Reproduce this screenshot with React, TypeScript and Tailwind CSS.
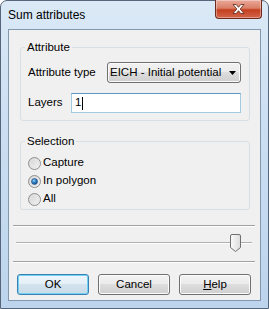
import type { FC, ReactNode } from 'react';

const font = { fontFamily: '"Liberation Sans", Arial, sans-serif' };

const Radio: FC<{ checked?: boolean; label: string }> = ({ checked, label }) => (
  <div className="flex h-[18px] items-center gap-[2px]">
    <svg width="13" height="13" viewBox="0 0 13 13">
      <defs>
        <linearGradient id="rb" x1="0" y1="0" x2="1" y2="1">
          <stop offset="0" stopColor="#cfcfcf" />
          <stop offset="1" stopColor="#f8f8f8" />
        </linearGradient>
        <radialGradient id="dot" cx="0.4" cy="0.35" r="0.7">
          <stop offset="0" stopColor="#9fd7f7" />
          <stop offset="0.5" stopColor="#2b7bc4" />
          <stop offset="1" stopColor="#134f8c" />
        </radialGradient>
      </defs>
      <circle cx="6.5" cy="6.5" r="6" fill="url(#rb)" stroke="#8e8f8f" />
      <circle cx="6.5" cy="6.5" r="4.2" fill="none" stroke="#e6e6e6" />
      {checked && <circle cx="6.5" cy="6.5" r="3" fill="url(#dot)" stroke="#1c4f80" strokeWidth="0.6" />}
    </svg>
    <span>{label}</span>
  </div>
);

const Group: FC<{ title: string; className: string; children: ReactNode }> = ({ title, className, children }) => (
  <fieldset className={`ml-[11px] w-[230px] rounded-[3px] border border-[#d5dfe5] pl-[7px] pr-[8px] ${className}`}>
    <legend className="ml-[-3px] px-[2px] leading-[15px]">{title}</legend>
    {children}
  </fieldset>
);

const Button: FC<{ children: ReactNode; primary?: boolean }> = ({ children, primary }) => (
  <button
    className={
      primary
        ? 'h-[21px] w-[72px] rounded-[3px] border border-[#3c7fb1] bg-[linear-gradient(180deg,#eef6fb_0%,#e3eef6_50%,#d3e3ee_50%,#c9dbe8_100%)] shadow-[inset_0_0_0_1px_#70d3f5] leading-[19px] text-black'
        : 'h-[21px] w-[72px] rounded-[3px] border border-[#707070] bg-[linear-gradient(180deg,#f2f2f2_0%,#ebebeb_50%,#dddddd_50%,#cfcfcf_100%)] shadow-[inset_0_0_0_1px_#fcfcfc] leading-[19px] text-black'
    }
  >
    {children}
  </button>
);

export default function App() {
  return (
    <div
      style={font}
      className="flex h-[309px] w-[269px] flex-col rounded-t-[7px] border border-[#55667a] bg-[linear-gradient(180deg,#dbe9f6_0%,#cfe1f3_30%,#bcd4ec_100%)] px-[7px] pb-[7px] text-[11.5px] text-black"
    >
      <div className="flex h-[28px] shrink-0 justify-between">
        <div className="self-center text-[12px] leading-[15px] text-black">Sum attributes</div>
        <div className="mr-[-1px] mt-[-1px] flex h-[19px] w-[47px] items-center justify-center rounded-b-[4px] border border-t-0 border-[#6e2a1e] bg-[linear-gradient(180deg,#eaa899_0%,#d98068_45%,#c3401f_55%,#d4664a_100%)] shadow-[inset_0_0_0_1px_rgba(255,255,255,0.35)]">
          <svg width="13" height="10" viewBox="0 0 13 10">
            <path
              d="M1 0.5h3.2L6.5 3.3 8.8 0.5H12L8.2 5 12 9.5H8.8L6.5 6.7 4.2 9.5H1L4.8 5z"
              fill="#ffffff"
              stroke="#5b2418"
              strokeWidth="0.8"
              strokeLinejoin="round"
            />
          </svg>
        </div>
      </div>

      <div className="flex flex-1 flex-col border border-[#8397ae] bg-[#f0f0f0]">
        <Group title="Attribute" className="mt-[10px] pb-[7px] pt-[7px]">
          <div className="flex h-[21px] items-center justify-between">
            <span>Attribute type</span>
            <div className="flex h-[21px] w-[134px] items-center rounded-[3px] border border-[#707070] bg-[linear-gradient(180deg,#f2f2f2_0%,#ebebeb_50%,#dddddd_50%,#cfcfcf_100%)] shadow-[inset_0_0_0_1px_#fafafa]">
              <span className="w-[116px] overflow-hidden whitespace-nowrap pl-[2px]">EICH - Initial potential head</span>
              <svg width="7" height="4" viewBox="0 0 7 4" className="ml-[5px]">
                <path d="M0 0h7L3.5 4z" fill="#000" />
              </svg>
            </div>
          </div>
          <div className="mt-[10px] flex h-[20px] items-center justify-between">
            <span>Layers</span>
            <div className="flex h-[20px] w-[170px] items-center border border-[#a4c9e3] border-t-[#5d97c8] bg-white pl-[3px]">
              <span>1</span>
              <span className="ml-[1px] h-[13px] w-[1px] bg-black" />
            </div>
          </div>
        </Group>

        <Group title="Selection" className="mt-[13px] pb-[1px] pt-[5px]">
          <Radio label="Capture" />
          <Radio label="In polygon" checked />
          <Radio label="All" />
        </Group>

        <div className="ml-[4px] mr-[5px] mt-[15px] border-b border-t border-b-white border-t-[#a0a0a0]" />

        <div className="ml-[7px] mr-[8px] mt-[7px] flex h-[18px] items-center">
          <div className="h-[2px] flex-1 border-b border-t border-b-white border-t-[#b0b0b0]" />
          <svg width="11" height="18" viewBox="0 0 11 18">
            <defs>
              <linearGradient id="th" x1="0" y1="0" x2="1" y2="0">
                <stop offset="0" stopColor="#fafafa" />
                <stop offset="1" stopColor="#dcdcdc" />
              </linearGradient>
            </defs>
            <path d="M2 0.5h7a1.5 1.5 0 0 1 1.5 1.5v11.5L5.5 17.5 0.5 13.5V2A1.5 1.5 0 0 1 2 0.5z" fill="url(#th)" stroke="#707070" />
          </svg>
          <div className="h-[2px] w-[11px] border-b border-t border-b-white border-t-[#b0b0b0]" />
        </div>

        <div className="ml-[4px] mr-[5px] mt-[9px] border-b border-t border-b-white border-t-[#a0a0a0]" />

        <div className="ml-[8px] mt-[11px] flex gap-[9px]">
          <Button primary>OK</Button>
          <Button>Cancel</Button>
          <Button>
            <span className="underline underline-offset-[1px]">H</span>elp
          </Button>
        </div>
      </div>
    </div>
  );
}
